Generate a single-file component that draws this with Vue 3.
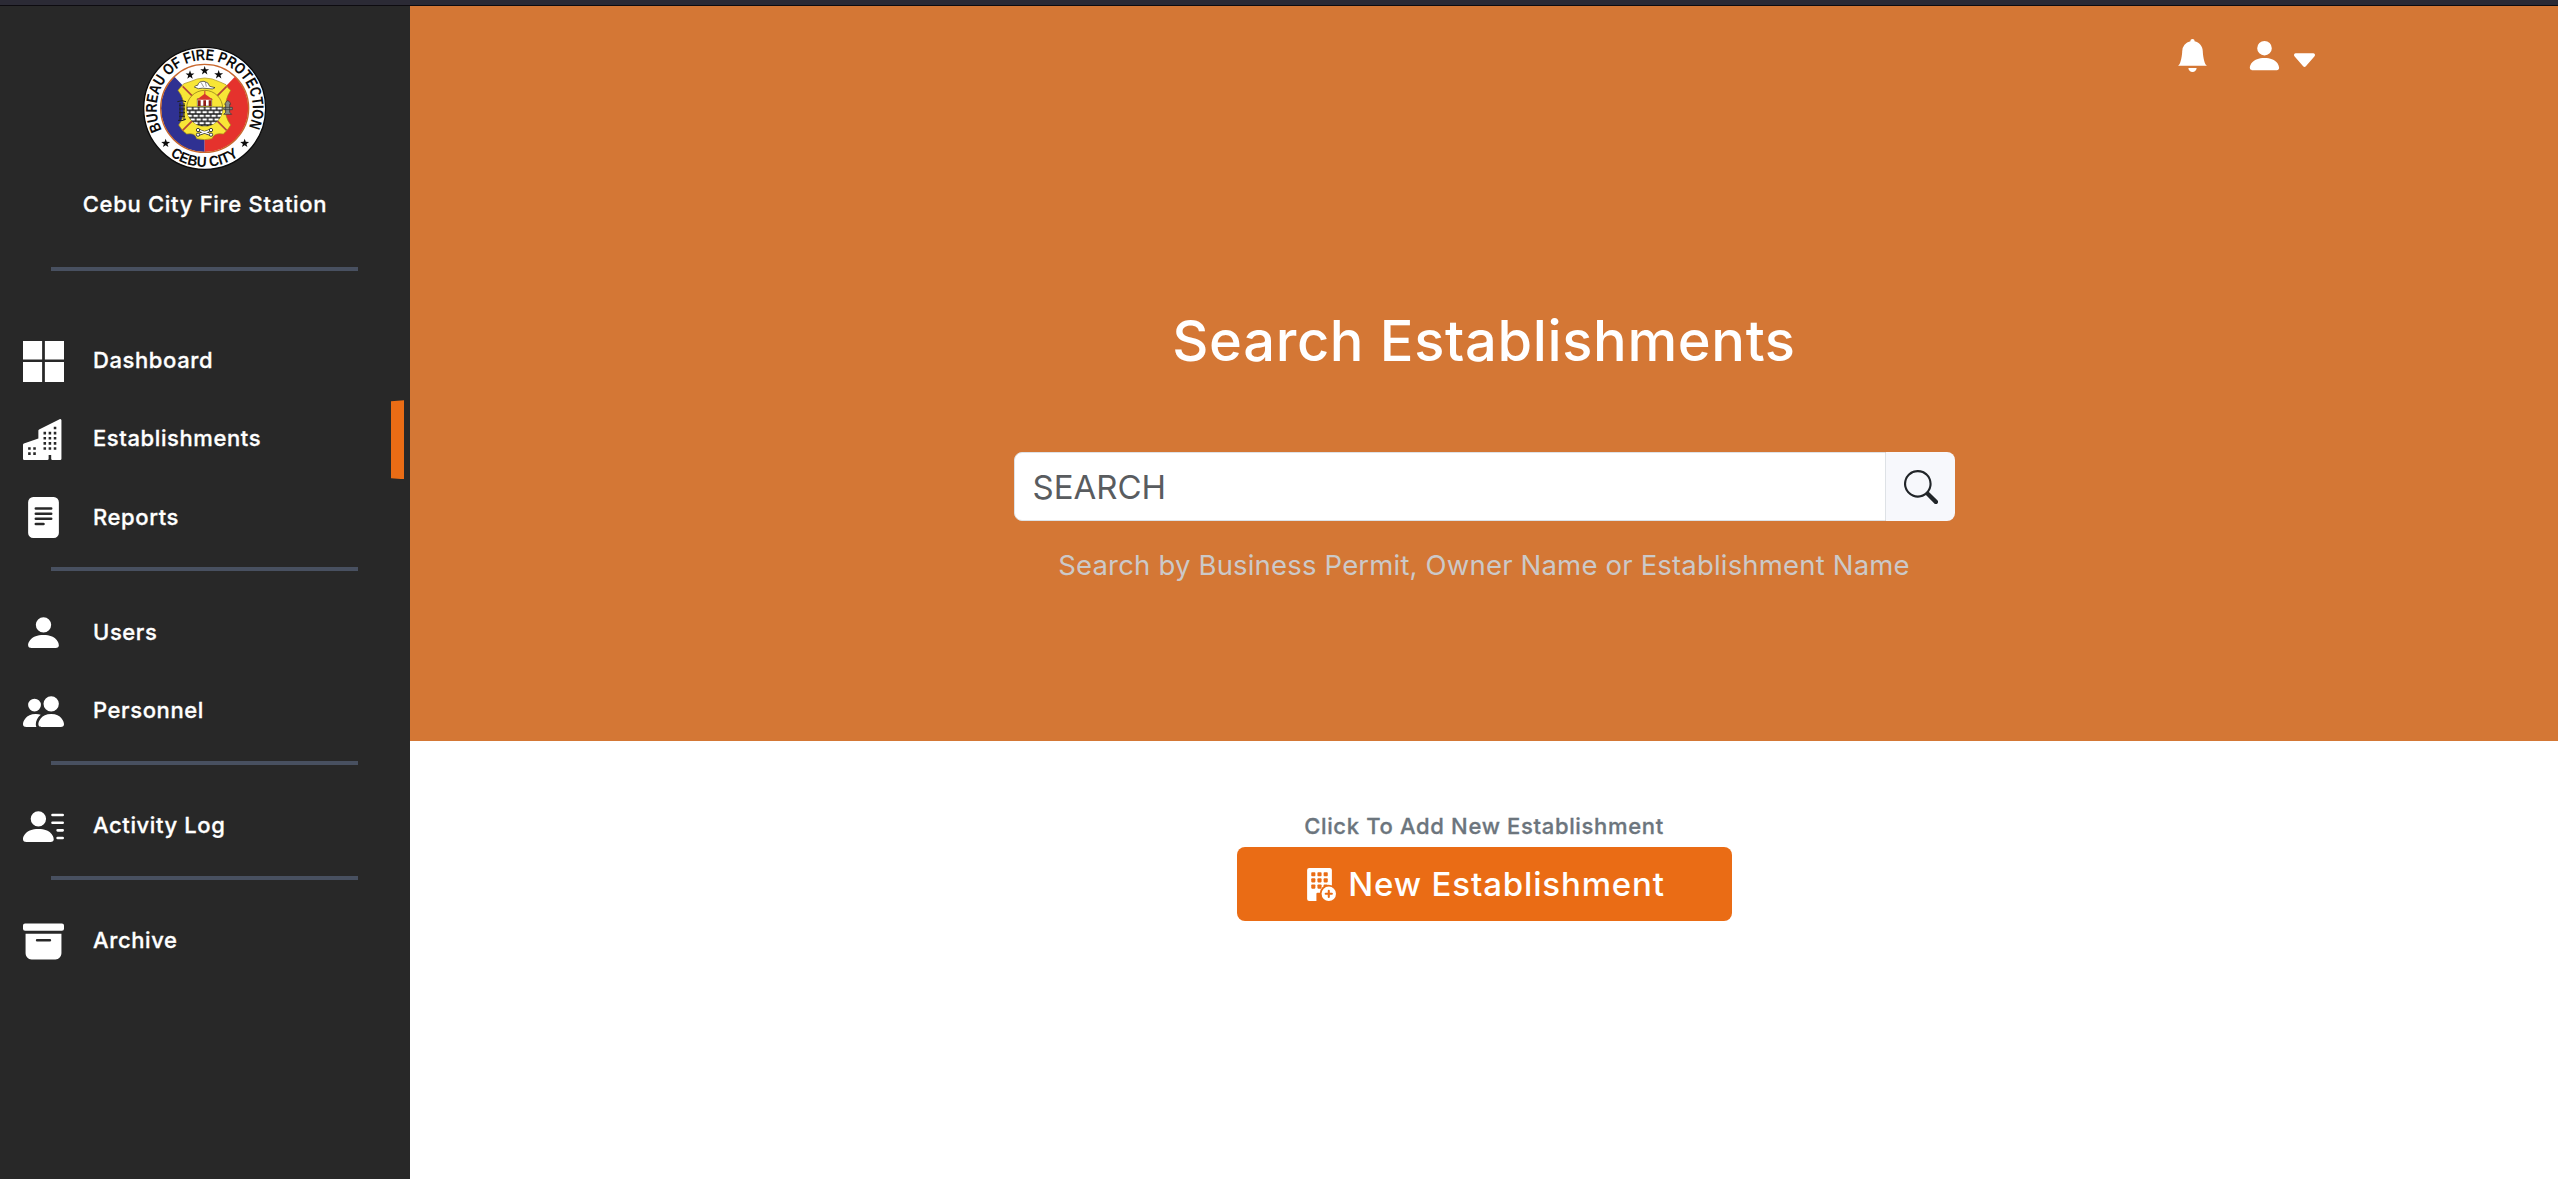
<script setup>
const groups = [
  [
    { label: 'Dashboard', d: 'M7.462 0H0v7.19h7.462V0zM16 0H8.538v7.19H16V0zM7.462 8.211H0V16h7.462V8.211zm8.538 0H8.538V16H16V8.211z' },
    { label: 'Establishments', active: true, d: 'M15 .5a.5.5 0 0 0-.724-.447l-8 4A.5.5 0 0 0 6 4.5v3.14L.342 9.526A.5.5 0 0 0 0 10v5.5a.5.5 0 0 0 .5.5h9a.5.5 0 0 0 .5-.5V14h1v1.5a.5.5 0 0 0 .5.5h3a.5.5 0 0 0 .5-.5V.5ZM2 11h1v1H2v-1Zm2 0h1v1H4v-1Zm-1 2v1H2v-1h1Zm1 0h1v1H4v-1Zm9-10v1h-1V3h1ZM8 5h1v1H8V5Zm1 2v1H8V7h1ZM8 9h1v1H8V9Zm2 0h1v1h-1V9Zm-1 2v1H8v-1h1Zm1 0h1v1h-1v-1Zm3-2v1h-1V9h1Zm-1 2h1v1h-1v-1Zm-2-4h1v1h-1V7Zm3 0v1h-1V7h1Zm-2-2v1h-1V5h1Zm1 0h1v1h-1V5Z' },
    { label: 'Reports', d: 'M12 0H4a2 2 0 0 0-2 2v12a2 2 0 0 0 2 2h8a2 2 0 0 0 2-2V2a2 2 0 0 0-2-2zM5 4h6a.5.5 0 0 1 0 1H5a.5.5 0 0 1 0-1zm-.5 2.5A.5.5 0 0 1 5 6h6a.5.5 0 0 1 0 1H5a.5.5 0 0 1-.5-.5zM5 8h6a.5.5 0 0 1 0 1H5a.5.5 0 0 1 0-1zm0 2h3a.5.5 0 0 1 0 1H5a.5.5 0 0 1 0-1z' },
  ],
  [
    { label: 'Users', d: 'M3 14s-1 0-1-1 1-4 6-4 6 3 6 4-1 1-1 1H3zm5-6a3 3 0 1 0 0-6 3 3 0 0 0 0 6z' },
    { label: 'Personnel', d: 'M7 14s-1 0-1-1 1-4 5-4 5 3 5 4-1 1-1 1H7Zm4-6a3 3 0 1 0 0-6 3 3 0 0 0 0 6Zm-5.784 6A2.238 2.238 0 0 1 5 13c0-1.355.68-2.75 1.936-3.72A6.325 6.325 0 0 0 5 9c-4 0-5 3-5 4s1 1 1 1h4.216ZM4.5 8a2.5 2.5 0 1 0 0-5 2.5 2.5 0 0 0 0 5Z' },
  ],
  [
    { label: 'Activity Log', d: 'M6 8a3 3 0 1 0 0-6 3 3 0 0 0 0 6zm-5 6s-1 0-1-1 1-4 6-4 6 3 6 4-1 1-1 1H1zM11 3.5a.5.5 0 0 1 .5-.5h4a.5.5 0 0 1 0 1h-4a.5.5 0 0 1-.5-.5zm.5 2.5a.5.5 0 0 0 0 1h4a.5.5 0 0 0 0-1h-4zm2 3a.5.5 0 0 0 0 1h2a.5.5 0 0 0 0-1h-2zm0 3a.5.5 0 0 0 0 1h2a.5.5 0 0 0 0-1h-2z' },
  ],
  [
    { label: 'Archive', d: 'M12.643 15C13.979 15 15 13.845 15 12.5V5H1v7.5C1 13.845 2.021 15 3.357 15h9.286zM5.5 7h5a.5.5 0 0 1 0 1h-5a.5.5 0 0 1 0-1zM.8 1a.8.8 0 0 0-.8.8V3a.8.8 0 0 0 .8.8h14.4A.8.8 0 0 0 16 3V1.8a.8.8 0 0 0-.8-.8H.8z' },
  ],
]
const star = 'M0-14 3.3-4.5 13.3-4.3 5.3 1.7 8.2 11.3 0 5.6-8.2 11.3-5.3 1.7-13.3-4.3-3.3-4.5Z'
const stars = [[180, 120], [224, 107], [266, 119], [107, 325], [344, 325]]
const windows = [2, 5, 8].flatMap((y) => [4, 7, 10].map((x) => [x, y]))
</script>

<template>
  <div class="page">
    <div class="strip"></div>
    <div class="body">
      <aside class="sidebar">
        <svg class="seal" viewBox="0 0 450 435" aria-label="Bureau of Fire Protection seal">
          <defs>
            <path id="arc-top" d="M95.500 284.500A144 144 0 1 1 352.500 284.500" />
            <path id="arc-bottom" d="M117 359A175 175 0 0 0 331 359" />
            <pattern id="bricks" width="18" height="22" patternUnits="userSpaceOnUse" x="170" y="215">
              <rect width="18" height="22" fill="#111" />
              <path d="M2 2h14v7H2zM0 13h7v7H0zM11 13h7v7h-7z" fill="#fff" />
            </pattern>
            <clipPath id="disc"><circle cx="224" cy="220" r="131" /></clipPath>
            <clipPath id="core"><circle cx="224" cy="220" r="54" /></clipPath>
          </defs>
          <circle cx="224" cy="220" r="183" fill="#fff" stroke="#0c0c0c" stroke-width="4" />
          <g clip-path="url(#disc)">
            <rect x="90" y="85" width="270" height="270" fill="#fff" />
            <path d="M224 220 85 75V360H224Z" fill="#2f3192" />
            <path d="M224 220 363 75V360H224Z" fill="#e5322d" />
          </g>
          <circle cx="224" cy="220" r="132" fill="none" stroke="#c8672d" stroke-width="4" />
          <path
            d="M180 140Q224 118 268 140L288 149Q292 158 302 166Q284 195 288 218Q282 242 302 270Q292 288 280 297Q252 292 246 311Q224 317 200 311Q196 292 170 297Q156 288 146 270Q166 242 160 218Q164 192 144 166Q156 150 162 146Z"
            fill="#f8e636" stroke="#a58a17" stroke-width="2"
          />
          <path d="M158 154 290 286M290 154 158 286" stroke="#b5473a" stroke-width="5" />
          <circle cx="224" cy="220" r="54" fill="#f8e636" stroke="#7d6c15" stroke-width="2" />
          <g clip-path="url(#core)">
            <rect x="168" y="215" width="112" height="62" fill="url(#bricks)" />
          </g>
          <path d="M202 191h43v22h-43z" fill="#fff" stroke="#222" stroke-width="1.500" />
          <path d="M224 176 249 194H200Z" fill="#d9382b" />
          <path d="M223 167h3v12h-3z" fill="#c33" />
          <path d="M204 196h8v17h-8zM220 196h8v17h-8zM236 196h8v17h-8z" fill="#8f1d18" />
          <path d="M193 156Q198 150 203 151Q206 138 222 139Q236 141 239 154L255 158Q248 164 237 161Q215 158 205 161Z" fill="#fff" stroke="#222" stroke-width="2" />
          <path d="M213 142l8 14M226 141l3 14" stroke="#333" stroke-width="1.500" />
          <path d="M142 200q16-6 26 0M150 204v52M162 204v52M147 211h18M147 222h18M147 233h18M147 244h18M144 256q12 4 24-4" fill="none" stroke="#222" stroke-width="3" />
          <path d="M287 203q6-12 13 0l2 5h-3v24l6 6h-24l6-6v-24h-3zM281 217h26v7h-26z" fill="#8b8d84" stroke="#333" stroke-width="2" />
          <path d="M204 285 243 299M243 285 204 299" stroke="#222" stroke-width="8" />
          <path d="M204 285 243 299M243 285 204 299" stroke="#fff" stroke-width="4" />
          <g fill="#fff" stroke="#222" stroke-width="2.500">
            <circle cx="204" cy="285" r="5" /><circle cx="243" cy="285" r="5" />
            <circle cx="204" cy="299" r="5" /><circle cx="243" cy="299" r="5" />
          </g>
          <path v-for="(s, i) in stars" :key="i" :d="star" :transform="`translate(${s[0]} ${s[1]})`" fill="#0c0c0c" />
          <text class="seal-text" font-size="47">
            <textPath href="#arc-top" textLength="578" lengthAdjust="spacingAndGlyphs">BUREAU OF FIRE PROTECTION</textPath>
          </text>
          <text class="seal-text" font-size="44">
            <textPath href="#arc-bottom" startOffset="4" textLength="220" lengthAdjust="spacingAndGlyphs">CEBU CITY</textPath>
          </text>
        </svg>
        <div class="station">Cebu City Fire Station</div>
        <nav>
          <section v-for="(g, gi) in groups" :key="gi" class="group">
            <a v-for="item in g" :key="item.label" class="item" :class="{ active: item.active }">
              <svg class="item-icon" viewBox="0 0 16 16"><path :d="item.d" /></svg>
              <span>{{ item.label }}</span>
            </a>
          </section>
        </nav>
      </aside>
      <main class="main">
        <section class="hero">
          <header class="topbar">
            <svg class="bell" viewBox="0 0 16 16"><path d="M8 16a2 2 0 0 0 2-2H6a2 2 0 0 0 2 2zm.995-14.901a1 1 0 1 0-1.99 0A5.002 5.002 0 0 0 3 6c0 1.098-.5 6-2 7h14c-1.5-1-2-5.902-2-7 0-2.42-1.72-4.44-4.005-4.901z" /></svg>
            <svg class="person" viewBox="0 0 16 16"><path :d="groups[1][0].d" /></svg>
            <svg class="caret" viewBox="0 0 16 16"><path d="M7.247 11.14 2.451 5.658C1.885 5.013 2.345 4 3.204 4h9.592a1 1 0 0 1 .753 1.659l-4.796 5.48a1 1 0 0 1-1.506 0z" /></svg>
          </header>
          <h1>Search Establishments</h1>
          <div class="search">
            <input class="field" placeholder="SEARCH" />
            <button class="go" aria-label="Search">
              <svg viewBox="0 0 16 16"><path d="M11.742 10.344a6.5 6.5 0 1 0-1.397 1.398h-.001c.03.04.062.078.098.115l3.85 3.85a1 1 0 0 0 1.415-1.414l-3.85-3.85a1.007 1.007 0 0 0-.115-.1zM12 6.5a5.5 5.5 0 1 1-11 0 5.5 5.5 0 0 1 11 0z" /></svg>
            </button>
          </div>
          <p class="hint">Search by Business Permit, Owner Name or Establishment Name</p>
        </section>
        <section class="add">
          <p class="caption">Click To Add New Establishment</p>
          <button class="new">
            <svg viewBox="0 0 16 16">
              <path d="M3 0h10a1 1 0 0 1 1 1v12H9.500V12.500a.5.5 0 0 0-.5-.5H7a.5.5 0 0 0-.5.5V16H3a1 1 0 0 1-1-1V1a1 1 0 0 1 1-1z" fill="#fff" />
              <rect v-for="(w, i) in windows" :key="i" :x="w[0]" :y="w[1]" width="2" height="2" rx=".4" fill="#ea6c15" />
              <circle cx="12.500" cy="12.500" r="4.400" fill="#ea6c15" />
              <circle cx="12.500" cy="12.500" r="3.500" fill="#fff" />
              <path d="M12.500 11v3M11 12.500h3" stroke="#ea6c15" stroke-linecap="round" />
            </svg>
            <span>New Establishment</span>
          </button>
        </section>
      </main>
    </div>
  </div>
</template>

<style>
body { margin: 0; }
</style>

<style scoped>
.page { height: 1179px; display: flex; flex-direction: column; font-family: Inter, sans-serif; font-weight: 500; overflow: hidden; }
.strip { height: 5px; flex: none; background: #2b2a35; border-bottom: 1px solid #0d0b10; }
.body { flex: 1; display: flex; min-height: 0; }
.sidebar { width: 410px; flex: none; background: #282828; color: #fff; display: flex; flex-direction: column; }
.seal { display: block; width: 150px; height: 145px; margin: 29px 0 0 130px; }
.seal-text { font-family: "Liberation Sans", sans-serif; font-weight: 700; fill: #0c0c0c; }
.station { height: 30px; line-height: 30px; margin-top: 9px; text-align: center; font-size: 22px; letter-spacing: 0.7px; -webkit-text-stroke: 0.3px #fff; }
nav { margin-top: 48px; }
.group::before { content: ""; display: block; height: 4px; width: 307px; margin: 10.4px 0 22.4px 51px; background: #485060; }
.group:first-child::before { margin-top: 0; margin-bottom: 51px; }
.group { display: flow-root; }
.item { height: 78.3px; display: flex; align-items: center; position: relative; font-size: 22px; letter-spacing: 0.6px; -webkit-text-stroke: 0.3px #fff; }
.item span { margin: 0 0 2px 29px; line-height: 30px; }
.item-icon { width: 41px; height: 41px; margin-left: 23px; fill: #fff; }
.item.active::after { content: ""; position: absolute; right: 6px; top: 0; width: 13px; height: 79px; background: #ea6c15; clip-path: polygon(0 1px, 100% 0, 100% 100%, 0 78px); }
.main { flex: 1; background: #fff; }
.hero { height: 735px; background: #d47735; display: flex; flex-direction: column; align-items: center; }
.topbar { align-self: stretch; height: 100px; display: flex; align-items: flex-start; justify-content: flex-end; padding-right: 239px; fill: #fff; }
.bell { width: 33px; height: 33px; margin-top: 33px; }
.person { width: 39px; height: 39px; margin: 30px 0 0 36px; }
.caret { width: 29px; height: 29px; margin: 39.500px 0 0 6px; }
h1 { margin: 200px 0 0; height: 70px; line-height: 70px; font-size: 56px; font-weight: 500; color: #fff; letter-spacing: 0.65px; }
.search { width: 941px; height: 69px; margin-top: 76px; display: flex; }
.field { flex: 1; min-width: 0; box-sizing: border-box; height: 69px; border: 1px solid #dee2e6; border-radius: 8px 0 0 8px; padding: 0 18px; font: 400 33px Inter, sans-serif; background: #fff; }
.field::placeholder { color: #595c5f; opacity: 1; }
.go { width: 69px; border: 0; border-radius: 0 8px 8px 0; background: #f7f8fc; padding: 0; display: flex; align-items: center; justify-content: center; }
.go svg { width: 34px; height: 34px; fill: #212529; margin-left: 2px; }
.hint { margin: 23.500px 0 0; line-height: 40px; font-size: 27.5px; font-weight: 400; color: #ccc9c8; letter-spacing: 0.18px; }
.add { display: flex; flex-direction: column; align-items: center; padding-top: 70px; }
.caption { margin: 0; line-height: 30px; font-size: 22px; color: #6c757d; letter-spacing: 0.66px; -webkit-text-stroke: 0.3px #6c757d; }
.new { margin-top: 6px; width: 495px; height: 74px; border: 0; border-radius: 8px; background: #ea6c15; color: #fff; font: 500 33px Inter, sans-serif; letter-spacing: 0.85px; display: flex; align-items: center; justify-content: center; gap: 12px; padding: 0; }
.new svg { width: 33px; height: 33px; }
</style>
